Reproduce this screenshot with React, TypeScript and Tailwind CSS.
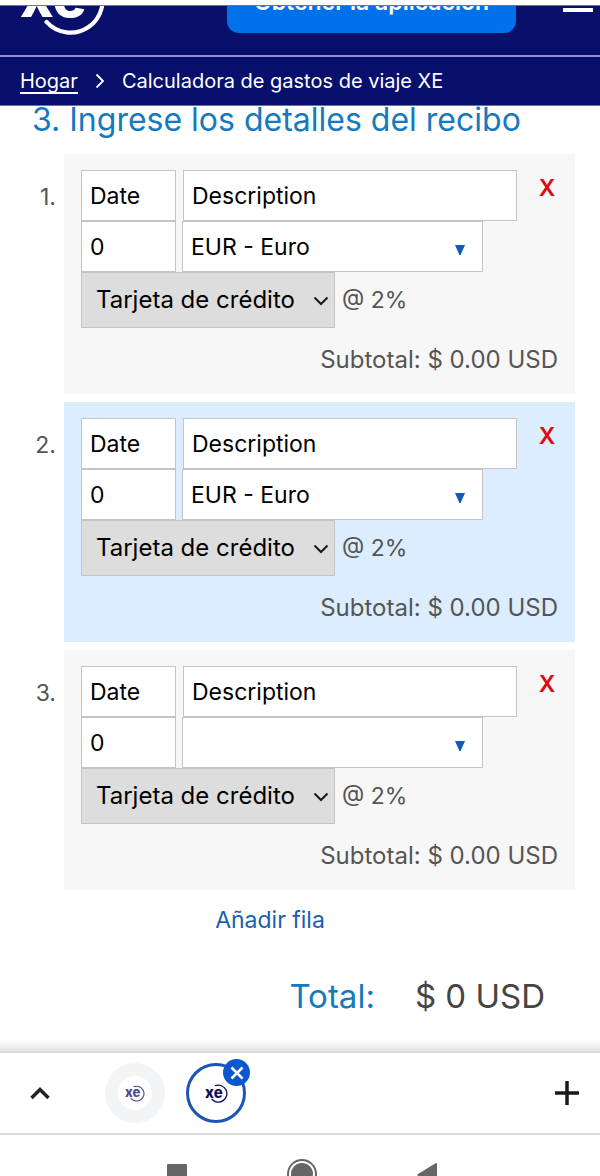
import { useId } from "react";

function XeLogo({ className, stroke }: { className: string; stroke: number }) {
  return (
    <svg viewBox="0 0 23 19" className={className} role="img" aria-label="XE">
      <text x="0" y="14" fontSize="15" fontWeight="800" fontFamily="Inter, sans-serif" fill="currentColor">
        xe
      </text>
      <path
        d="M10.5 1.6 A8.5 8.5 0 1 1 7 15.3"
        fill="none"
        stroke="currentColor"
        strokeWidth={stroke}
        strokeLinecap="round"
      />
    </svg>
  );
}

type Receipt = { number: number; currency: string; highlighted: boolean };

const receipts: Receipt[] = [
  { number: 1, currency: "EUR - Euro", highlighted: false },
  { number: 2, currency: "EUR - Euro", highlighted: true },
  { number: 3, currency: "", highlighted: false },
];

const field = "border border-[#c4c4c4] bg-white px-2 text-black placeholder:text-black placeholder:opacity-100";

function ReceiptRow({ number, currency, highlighted }: Receipt) {
  const id = useId();
  return (
    <li className="flex">
      <span className="w-16 shrink-0 pt-[27px] pr-2 text-right text-[#555555]">{number}.</span>
      <div
        className={
          highlighted ? "min-w-0 flex-1 bg-[#dbedfe] px-[17px] py-4" : "min-w-0 flex-1 bg-[#f7f7f7] px-[17px] py-4"
        }
      >
        <div className="flex gap-[7px]">
          <input aria-label="Date" placeholder="Date" className={`${field} h-[51px] w-[95px] shrink-0`} />
          <input
            aria-label="Description"
            placeholder="Description"
            className={`${field} h-[51px] min-w-0 flex-1`}
          />
          <button
            type="button"
            aria-label="Eliminar"
            className="h-9 w-[34px] shrink-0 pl-3 text-center font-semibold text-[#dd0d0d]"
          >
            X
          </button>
        </div>
        <div className="flex gap-[6px] pr-[75px]">
          <input aria-label="Importe" defaultValue="0" className={`${field} h-[51px] w-[95px] shrink-0`} />
          <div className="relative min-w-0 flex-1">
            <select
              aria-label="Moneda"
              defaultValue={currency}
              className={`${field} h-[51px] w-full appearance-none`}
            >
              <option value=""></option>
              <option>EUR - Euro</option>
              <option>USD - US Dollar</option>
            </select>
            <svg viewBox="0 0 10 10" className="pointer-events-none absolute top-6 right-[18px] size-[10px]">
              <path d="M0 0H10L5.6 10H4.4Z" fill="#0f5bb5" />
            </svg>
          </div>
        </div>
        <div className="flex items-center gap-[7px]">
          <div className="relative">
            <select
              id={id}
              className="h-14 w-[254px] appearance-none border border-[#c4c4c4] bg-[#dddddd] px-[14px] text-2xl text-black"
            >
              <option>Tarjeta de crédito</option>
              <option>Efectivo</option>
            </select>
            <svg
              viewBox="0 0 16 10"
              className="pointer-events-none absolute top-6 right-[6px] h-[10px] w-4"
              fill="none"
              stroke="#1a1a1a"
              strokeWidth="2"
            >
              <path d="M1.5 1.5 8 8l6.500-6.500" />
            </svg>
          </div>
          <label htmlFor={id} className="text-[#555555]">
            @ 2%
          </label>
        </div>
        <p className="pt-4 pb-[2px] text-right text-2xl leading-8 text-[#555555]">Subtotal: $ 0.00 USD</p>
      </div>
    </li>
  );
}

export default function App() {
  return (
    <div className="flex min-h-screen flex-col overflow-hidden bg-white pt-[5px] font-['Inter',sans-serif] text-[23px] leading-8">
      <header className="border-y border-[#6a6fa8] bg-[#08106c] text-white">
        <div className="flex h-[51px] items-end overflow-hidden border-b-2 border-[#8d93c8] pr-[7px] pl-5">
          <XeLogo className="mb-[19px] h-[72px] w-[87px]" stroke={1.1} />
          <button
            type="button"
            className="mr-[47px] mb-[22px] ml-auto h-[58px] w-[289px] rounded-xl bg-[#0071eb] pb-1 font-semibold"
          >
            Obtener la aplicación
          </button>
          <button type="button" aria-label="Menú" className="mb-[43px] flex w-[30px] flex-col gap-2">
            <span className="h-1 bg-white" />
            <span className="h-1 bg-white" />
            <span className="h-1 bg-white" />
          </button>
        </div>
        <nav aria-label="Ruta" className="flex h-12 items-center px-5 text-xl">
          <a href="#hogar" className="underline underline-offset-4">
            Hogar
          </a>
          <svg viewBox="0 0 10 16" className="mx-[17px] h-4 w-[10px]" fill="none" stroke="white" strokeWidth="1.800">
            <path d="M1.500 1.500 8 8l-6.500 6.500" />
          </svg>
          <span>Calculadora de gastos de viaje XE</span>
        </nav>
      </header>

      <main className="flex-1">
        <h1 className="-mt-1 pl-8 text-[32px] leading-9 text-[#1679bd]">3. Ingrese los detalles del recibo</h1>
        <ol className="mt-4 flex flex-col gap-2 pr-[25px]">
          {receipts.map((receipt) => (
            <ReceiptRow key={receipt.number} {...receipt} />
          ))}
        </ol>
        <div className="flex justify-center pt-[14px] pr-[60px]">
          <a href="#fila" className="text-[#1a60ac]">
            Añadir fila
          </a>
        </div>
        <div className="flex justify-end gap-10 pt-10 pr-[55px] text-[33px] leading-10">
          <span className="text-[#1679bd]">Total:</span>
          <span className="text-[#444444]">$ 0 USD</span>
        </div>
      </main>

      <div className="h-3 bg-linear-to-b from-white to-[#e4e4e4]" />
      <div className="flex h-[84px] items-center border-y-2 border-[#dadada] pr-[21px] pl-[30px]">
        <button type="button" aria-label="Expandir">
          <svg viewBox="0 0 20 14" className="h-[14px] w-5" fill="none" stroke="#222222" strokeWidth="3.500">
            <path d="M1.500 12 10 3.500 18.500 12" />
          </svg>
        </button>
        <button
          type="button"
          aria-label="Pestaña XE"
          className="ml-[55px] flex size-[60px] items-center justify-center rounded-full bg-[#f2f4f6]"
        >
          <span className="flex size-[34px] items-center justify-center rounded-full bg-white text-[#4b4893]">
            <XeLogo className="h-[17px] w-5" stroke={1.3} />
          </span>
        </button>
        <div className="relative ml-[21px]">
          <button
            type="button"
            aria-label="Pestaña XE actual"
            className="flex size-[60px] items-center justify-center rounded-full border-[3px] border-[#1c56b4] text-[#130b5c]"
          >
            <XeLogo className="h-[19px] w-[23px]" stroke={1.3} />
          </button>
          <button
            type="button"
            aria-label="Cerrar pestaña"
            className="absolute -top-1 -right-1 flex size-[27px] items-center justify-center rounded-full bg-[#0b57d0]"
          >
            <svg viewBox="0 0 14 14" className="size-[14px]" stroke="white" strokeWidth="2.500">
              <path d="M1.500 1.500l11 11M12.500 1.500l-11 11" />
            </svg>
          </button>
        </div>
        <button type="button" aria-label="Nueva pestaña" className="ml-auto">
          <svg viewBox="0 0 24 24" className="size-6" stroke="#1a1a1a" strokeWidth="3.500">
            <path d="M12 0v24M0 12h24" />
          </svg>
        </button>
      </div>
      <div className="h-[41px] overflow-hidden pt-6 pr-[163px] pl-[167px]">
        <div className="flex items-start justify-between">
          <svg viewBox="0 0 20 30" className="mt-1 h-[30px] w-5">
            <rect y="1" width="20" height="20" rx="1" fill="#666666" />
          </svg>
          <svg viewBox="0 0 30 30" className="size-[30px]">
            <circle cx="15" cy="15" r="14" fill="none" stroke="#666666" strokeWidth="2" />
            <circle cx="15" cy="15" r="11" fill="#666666" />
          </svg>
          <svg viewBox="0 0 20 30" className="mt-1 h-[30px] w-5">
            <path d="M19 0Q20 0 20 1V22Q20 24 18 23L1 13Q0 12 1 11Z" fill="#666666" />
          </svg>
        </div>
      </div>
    </div>
  );
}
